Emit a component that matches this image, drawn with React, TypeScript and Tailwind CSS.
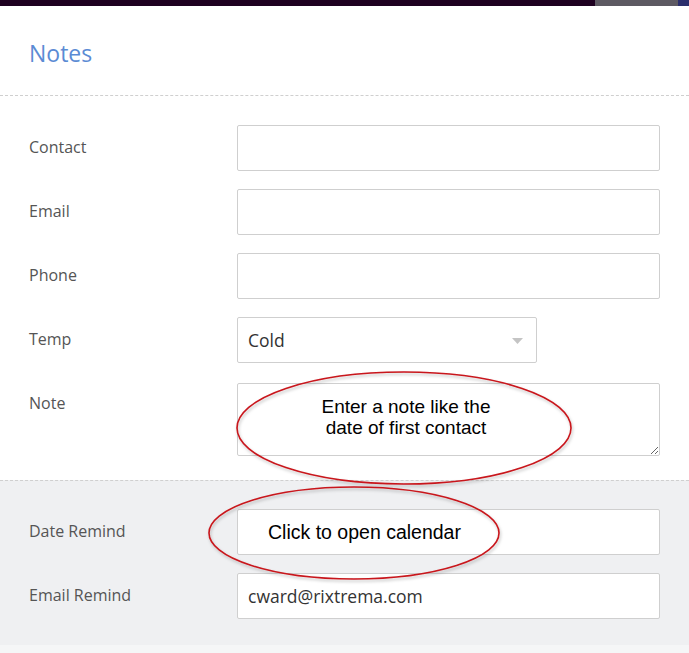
import React from 'react';

const font = { fontFamily: '"Open Sans", "Noto Sans", sans-serif' };

function Row({ label, children, tall }: { label: string; children: React.ReactNode; tall?: boolean }) {
  return (
    <div className={`flex ${tall ? 'items-start' : 'items-center'}`}>
      <div className={`w-[208px] shrink-0 text-[16px] text-[#555] ${tall ? 'pt-[8px]' : 'pb-[3px]'}`}>{label}</div>
      {children}
    </div>
  );
}

const inputCls =
  'h-[46px] w-[426px] rounded-[2px] border border-[#cfcfcf] bg-white px-[10px] text-[17.5px] text-[#333] outline-none';

export default function App() {
  return (
    <div className="relative h-[653px] w-[689px] overflow-hidden bg-white" style={font}>
      {/* top bar */}
      <div className="flex h-[6px] w-full bg-[#1e0020]">
        <div className="flex-1" />
        <div className="w-[83px] bg-[#5d5962]" />
        <div className="w-[11px] bg-[#2b2e6c]" />
      </div>

      <div className="flex h-[90px] items-center border-b border-dashed border-[#cfcfcf] px-[29px] pt-[6px]">
        <h1 className="text-[23px] text-[#5b8bd4]">Notes</h1>
      </div>

      <div className="flex flex-col gap-[18px] px-[29px] pb-[24px] pt-[29px]">
        <Row label="Contact">
          <input className={inputCls} />
        </Row>
        <Row label="Email">
          <input className={inputCls} />
        </Row>
        <Row label="Phone">
          <input className={inputCls} />
        </Row>
        <Row label="Temp">
          <div className="relative flex h-[46px] w-[300px] items-center rounded-[2px] border border-[#cfcfcf] bg-white px-[10px] text-[17.5px] text-[#333]">
            Cold
            <svg className="absolute right-[13px] top-[20px]" width="11" height="6" viewBox="0 0 11 6">
              <path d="M0 0 L11 0 L5.5 6 Z" fill="#c4c4c4" />
            </svg>
          </div>
        </Row>
        <div className="mt-[2px]">
          <Row label="Note" tall>
            <textarea className="h-[73px] w-[426px] rounded-[2px] border border-[#cfcfcf] bg-white px-[10px] text-[17px] outline-none" />
          </Row>
        </div>
      </div>

      <div className="flex h-[165px] flex-col gap-[18px] border-t border-dashed border-[#cfcfcf] bg-[#eff0f2] px-[29px] pt-[28px]">
        <Row label="Date Remind">
          <input className={inputCls} />
        </Row>
        <Row label="Email Remind">
          <input className={inputCls} defaultValue="cward@rixtrema.com" />
        </Row>
      </div>
      <div className="h-[10px] bg-[#f5f6f7]" />

      {/* annotation callouts */}
      <svg className="pointer-events-none absolute left-0 top-0" width="689" height="653">
        <defs>
          <filter id="sh" x="-10%" y="-10%" width="120%" height="130%">
            <feDropShadow dx="1" dy="2" stdDeviation="1.5" floodColor="#000" floodOpacity="0.25" />
          </filter>
        </defs>
        <ellipse cx="404" cy="428" rx="167" ry="56" fill="none" stroke="#c8151b" strokeWidth="1.6" filter="url(#sh)" />
        <ellipse cx="354" cy="533" rx="145" ry="46" fill="none" stroke="#c8151b" strokeWidth="1.6" filter="url(#sh)" />
      </svg>
      <div
        className="pointer-events-none absolute left-[291px] top-[396px] w-[230px] text-center text-[19px] leading-[21px] text-black"
        style={{ fontFamily: '"Liberation Sans", Arial, sans-serif' }}
      >
        Enter a note like the
        <br />
        date of first contact
      </div>
      <div
        className="pointer-events-none absolute left-[268px] top-[518px] text-[19.5px] text-black"
        style={{ fontFamily: '"Liberation Sans", Arial, sans-serif' }}
      >
        Click to open calendar
      </div>
    </div>
  );
}
